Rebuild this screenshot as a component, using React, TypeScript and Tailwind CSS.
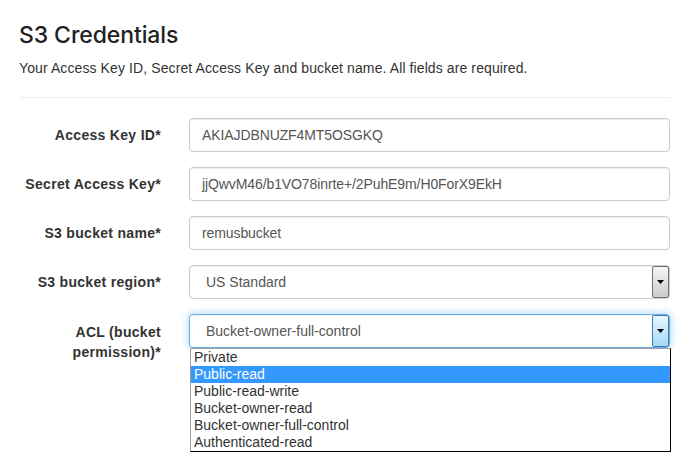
import React from "react";

// Text field row
const Field: React.FC<{ label: string; value: string }> = ({ label, value }) => (
  <div className="flex items-center gap-[28px]">
    <label className="w-[142px] shrink-0 text-right font-bold text-[14px] tracking-[0.3px] text-[#333]">
      {label}
    </label>
    <div className="w-[481px] h-[34px] flex items-center px-[12px] rounded-[4px] border border-[#ccc] bg-white shadow-[inset_0_1px_1px_rgba(0,0,0,0.075)] text-[14px] tracking-[-0.1px] text-[#555]">
      {value}
    </div>
  </div>
);

const Arrow: React.FC = () => (
  <svg width="7" height="4" viewBox="0 0 7 4">
    <path d="M0 0h7L3.5 4z" fill="#000" />
  </svg>
);

const options = [
  "Private",
  "Public-read",
  "Public-read-write",
  "Bucket-owner-read",
  "Bucket-owner-full-control",
  "Authenticated-read",
];

export default function App() {
  return (
    <div className="w-[689px] h-[462px] bg-white px-[19px] pt-[20px] font-['Liberation_Sans',Arial,sans-serif] overflow-hidden">
      <h1 className="font-['Inter',sans-serif] font-medium text-[23px] leading-[30px] tracking-[-0.1px] text-[#222]">
        S3 Credentials
      </h1>
      <p className="mt-[8px] text-[14px] leading-[20px] tracking-[0.1px] text-[#333]">
        Your Access Key ID, Secret Access Key and bucket name. All fields are required.
      </p>
      <hr className="mt-[19px] border-t border-[#eee]" />

      <div className="mt-[20px] flex flex-col gap-[15px]">
        <Field label="Access Key ID*" value="AKIAJDBNUZF4MT5OSGKQ" />
        <Field label="Secret Access Key*" value="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" />
        <Field label="S3 bucket name*" value="remusbucket" />

        {/* region select */}
        <div className="flex items-center gap-[28px]">
          <label className="w-[142px] shrink-0 text-right font-bold text-[14px] tracking-[0.3px] text-[#333]">
            S3 bucket region*
          </label>
          <div className="w-[481px] h-[34px] flex items-center rounded-[4px] border border-[#ccc] bg-white shadow-[inset_0_1px_1px_rgba(0,0,0,0.075)]">
            <span className="flex-1 pl-[16px] text-[14px] text-[#555]">US Standard</span>
            <div className="w-[17px] h-[32px] flex items-center justify-center border border-[#707070] rounded-[2px] bg-gradient-to-b from-[#f4f4f4] to-[#cdcdcd]">
              <Arrow />
            </div>
          </div>
        </div>

        {/* ACL select, opened */}
        <div className="flex items-start gap-[28px]">
          <label className="w-[142px] shrink-0 text-right font-bold text-[14px] leading-[20px] tracking-[0.3px] text-[#333] pt-[8px]">
            ACL (bucket
            <br />
            permission)*
          </label>
          <div className="relative w-[481px]">
            <div className="h-[34px] flex items-center rounded-[4px] border border-[#66afe9] bg-white shadow-[inset_0_1px_1px_rgba(0,0,0,0.075),0_0_8px_rgba(102,175,233,0.6)]">
              <span className="flex-1 pl-[16px] text-[14px] text-[#555]">Bucket-owner-full-control</span>
              <div className="w-[17px] h-[32px] flex items-center justify-center border border-[#3c7fb1] rounded-[2px] bg-gradient-to-b from-[#eaf6fd] to-[#a7d9f5]">
                <Arrow />
              </div>
            </div>
            <ul className="absolute left-[1px] top-[34px] w-[481px] bg-white border-l border-t border-[#a0a0a0] border-r-[#000] border-b-[#000] border-r border-b text-[14px] leading-[17px] text-[#333]">
              {options.map((o) => (
                <li
                  key={o}
                  className={
                    o === "Public-read"
                      ? "pl-[3px] bg-[#3399ff] text-white"
                      : "pl-[3px]"
                  }
                >
                  {o}
                </li>
              ))}
            </ul>
          </div>
        </div>
      </div>
    </div>
  );
}
